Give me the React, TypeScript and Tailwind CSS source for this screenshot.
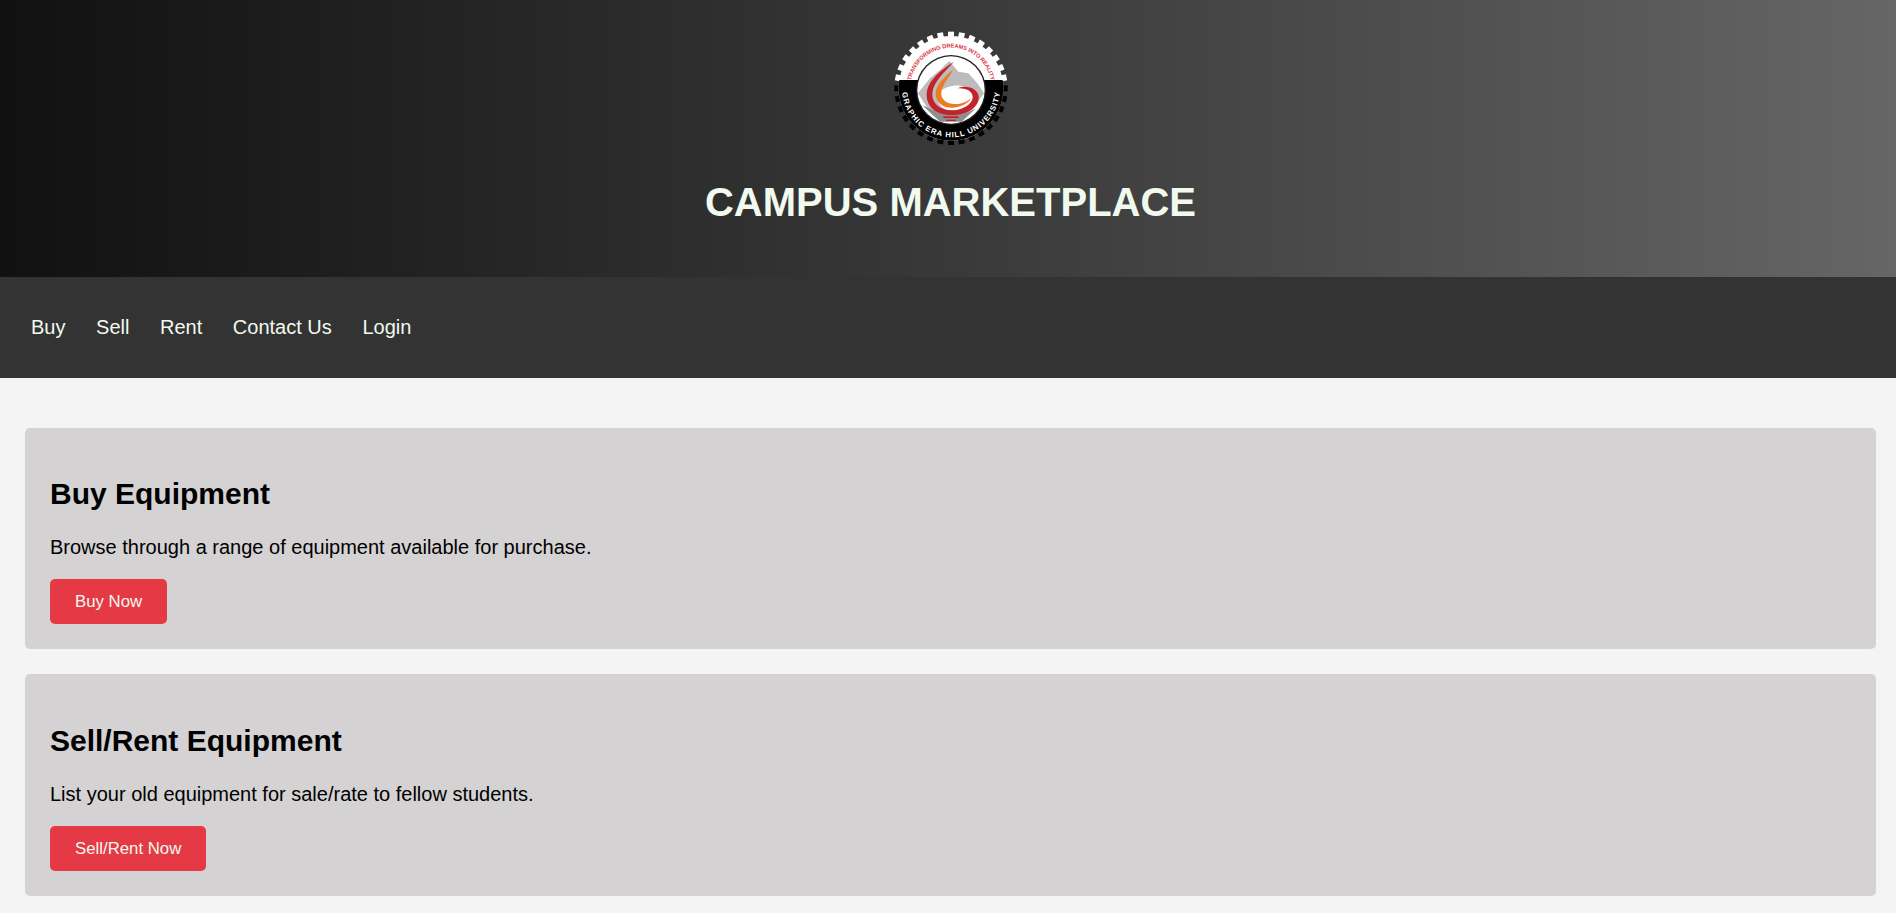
const links = ["Buy", "Sell", "Rent", "Contact Us", "Login"];

function Logo() {
  // 32 gear teeth, white above the band split and black below it
  const teeth = Array.from({ length: 32 }, (_, i) => i * 11.25);
  return (
    <svg viewBox="0 0 366 375" className="h-[125px] w-[122px]">
      <defs>
        <path id="topArc" d="M 183 312 A 122 122 0 1 1 183 68 A 122 122 0 1 1 183 312" />
        <path id="bottomArc" d="M 183 43 A 147 147 0 1 0 183 337 A 147 147 0 1 0 183 43" />
      </defs>
      {teeth.map((a) => (
        <rect
          key={a}
          x="174"
          y="20"
          width="18"
          height="22"
          fill={a > 81 && a < 279 ? "#000" : "#fff"}
          transform={`rotate(${a} 183 190)`}
        />
      ))}
      <circle cx="183" cy="190" r="157" fill="#fff" />
      <path d="M 28 165 L 338 165 A 157 157 0 1 1 28 165 Z" fill="#000" />
      <text fontFamily="Liberation Sans" fontSize="17" fontWeight="700" fill="#d8353f">
        <textPath href="#topArc" startOffset="50%" textAnchor="middle" textLength="335">
          TRANSFORMING DREAMS INTO REALITY
        </textPath>
      </text>
      <text fontFamily="Liberation Sans" fontSize="23" fontWeight="700" fill="#fff">
        <textPath href="#bottomArc" startOffset="50%" textAnchor="middle" textLength="436">
          GRAPHIC ERA HILL UNIVERSITY
        </textPath>
      </text>
      <circle cx="183" cy="195" r="105" fill="#222" />
      <circle cx="183" cy="195" r="101" fill="#fff" />
      <path
        d="M 84 205 L 120 160 L 150 135 L 178 108 L 205 140 L 235 145 L 262 175 L 282 205 L 240 262 L 120 262 Z"
        fill="#bdbbbb"
      />
      <path d="M 96 240 L 130 255 L 235 262 L 258 250 L 215 290 L 150 290 Z" fill="#8f8d8d" />
      <path
        d="M 150 200 C 175 175 225 175 248 200 C 262 235 225 256 185 256 C 150 256 135 225 150 200 Z"
        fill="#fff"
      />
      <path
        d="M 192 110 C 160 130 110 165 110 210 C 110 250 145 272 190 270 C 235 268 268 245 266 215 C 264 192 232 178 203 190 C 228 188 250 200 248 218 C 245 240 215 256 185 256 C 150 256 125 235 127 205 C 129 170 165 140 192 110 Z"
        fill="#c4232b"
      />
      <path
        d="M 188 135 C 165 155 135 180 137 210 C 140 238 165 250 190 248 C 215 246 240 232 243 218 C 232 232 205 240 185 236 C 160 232 150 215 155 195 C 160 175 180 155 188 135 Z"
        fill="#ee7a24"
      />
      <path d="M 160 274 H 206 V 279 H 160 Z M 168 284 H 198 V 288 H 168 Z" fill="#c4232b" />
    </svg>
  );
}

function Card({ title, text, action }: { title: string; text: string; action: string }) {
  return (
    <section className="rounded-[5px] bg-[#d4d2d3] px-[25px] pb-[25.2px] pt-[49.2px]">
      <h2 className="text-[30px] font-bold leading-[34px] text-black">{title}</h2>
      <p className="mt-[25px] text-[20px] leading-[23px] text-black">{text}</p>
      <a className="mt-[20px] inline-block h-[45px] rounded-[5px] bg-[#e63946] px-[25px] text-[16.8px] leading-[45px] text-[#f1faee]">
        {action}
      </a>
    </section>
  );
}

export default function App() {
  return (
    <div className="min-h-[913px] bg-[#f4f4f4] font-['Liberation_Sans',Arial,sans-serif]">
      <header className="flex h-[277px] flex-col items-center bg-gradient-to-r from-[#111111] to-[#666666] pl-[5px] pt-[25px]">
        <Logo />
        <h1 className="mt-[29px] text-[40px] font-bold leading-[46px] text-[#f1faee]">CAMPUS MARKETPLACE</h1>
      </header>
      <nav className="flex h-[101px] items-center gap-[30.6px] bg-[#333333] pb-[2px] pl-[31px]">
        {links.map((l) => (
          <a key={l} className="text-[20px] text-[#f1faee]">
            {l}
          </a>
        ))}
      </nav>
      <main className="flex flex-col gap-[25px] pb-[17px] pl-[25px] pr-[20px] pt-[50px]">
        <Card
          title="Buy Equipment"
          text="Browse through a range of equipment available for purchase."
          action="Buy Now"
        />
        <Card
          title="Sell/Rent Equipment"
          text="List your old equipment for sale/rate to fellow students."
          action="Sell/Rent Now"
        />
      </main>
    </div>
  );
}
